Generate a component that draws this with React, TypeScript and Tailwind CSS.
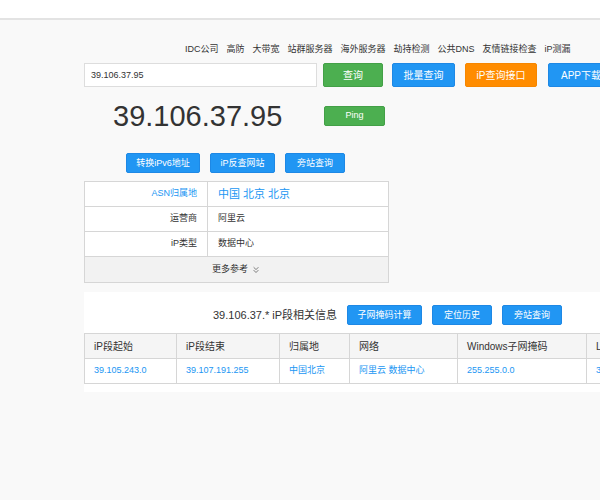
import { ChevronsDown } from "lucide-react";

const font = { fontFamily: '"Liberation Sans", "Noto Sans CJK SC", sans-serif' };

const navLinks = ["IDC公司", "高防", "大带宽", "站群服务器", "海外服务器", "劫持检测", "公共DNS", "友情链接检查", "iP测漏"];

const infoRows = [
  { label: "运营商", value: "阿里云" },
  { label: "iP类型", value: "数据中心" },
];

const segCols = [
  { head: "iP段起始", value: "39.105.243.0", w: "w-[91px]" },
  { head: "iP段结束", value: "39.107.191.255", w: "w-[103px]" },
  { head: "归属地", value: "中国北京", w: "w-[70px]" },
  { head: "网络", value: "阿里云 数据中心", w: "w-[108px]" },
  { head: "Windows子网掩码", value: "255.255.0.0", w: "w-[129px]" },
  { head: "Linux子网掩码", value: "39.105.0.0/16", w: "w-[129px]" },
];

function BlueBtn({ label, w }: { label: string; w: string }) {
  return (
    <button className={`${w} h-[20px] rounded-[2px] bg-[#2196f3] border border-[#1e88e5] text-white text-[9px] leading-none`}>
      {label}
    </button>
  );
}

export default function App() {
  return (
    <div className="w-[600px] h-[500px] overflow-hidden bg-[#f9f9f9] text-[#333]" style={font}>
      <div className="h-[20px] bg-white border-b-2 border-[#e3e3e3]"></div>

      <div className="pl-[84px] w-[1200px]">
        {/* top links */}
        <nav className="flex gap-[8px] ml-[101px] mt-[23px] h-[14px] items-center text-[9px] text-[#333]">
          {navLinks.map((l) => (
            <a key={l}>{l}</a>
          ))}
        </nav>

        {/* search row */}
        <div className="flex items-center mt-[6px] h-[24px]">
          <input
            defaultValue="39.106.37.95"
            className="w-[233px] h-[24px] bg-white border border-[#ddd] px-[6px] text-[9px] text-[#333] outline-none"
          />
          <button className="ml-[6px] w-[60px] h-[24px] rounded-[2px] bg-[#4caf50] border border-[#43a047] text-white text-[10px]">查询</button>
          <button className="ml-[9px] w-[63px] h-[24px] rounded-[2px] bg-[#2196f3] border border-[#1e88e5] text-white text-[10px]">批量查询</button>
          <button className="ml-[10px] w-[72px] h-[24px] rounded-[2px] bg-[#ff8c00] border border-[#f68600] text-white text-[10px]">iP查询接口</button>
          <button className="ml-[11px] w-[66px] h-[24px] rounded-[2px] bg-[#2196f3] border border-[#1e88e5] text-white text-[10px]">APP下载</button>
        </div>

        {/* big ip */}
        <div className="flex items-center h-[40px] mt-[9px]">
          <div className="ml-[29px] w-[211px] text-[29px] leading-none text-[#333]">39.106.37.95</div>
          <button className="w-[61px] h-[20px] rounded-[2px] bg-[#4caf50] border border-[#43a047] text-white text-[9px]">Ping</button>
        </div>

        {/* action buttons */}
        <div className="flex gap-[10px] ml-[42px] mt-[17px]">
          <BlueBtn label="转换iPv6地址" w="w-[74px]" />
          <BlueBtn label="iP反查网站" w="w-[65px]" />
          <BlueBtn label="旁站查询" w="w-[60px]" />
        </div>

        {/* info table */}
        <div className="mt-[8px] w-[305px] bg-white border border-[#d6d6d6] text-[9px]">
          <div className="flex h-[25px] border-b border-[#d6d6d6]">
            <div className="w-[123px] pr-[10px] flex items-center justify-end text-[#2196f3] border-r border-[#d6d6d6]">ASN归属地</div>
            <div className="flex-1 pl-[10px] flex items-center text-[#2196f3] text-[11px]">中国 北京 北京</div>
          </div>
          {infoRows.map((r) => (
            <div key={r.label} className="flex h-[25px] border-b border-[#d6d6d6]">
              <div className="w-[123px] pr-[10px] flex items-center justify-end border-r border-[#d6d6d6]">{r.label}</div>
              <div className="flex-1 pl-[10px] flex items-center">{r.value}</div>
            </div>
          ))}
          <div className="flex h-[25px] items-center justify-center gap-[3px] bg-[#f2f2f2]">
            更多参考 <ChevronsDown size={10} strokeWidth={1.5} />
          </div>
        </div>
      </div>

      {/* ip segment section */}
      <div className="mt-[9px] ml-[84px] w-[1200px] bg-white pt-[13px] pb-[8px]">
        <div className="flex items-center h-[20px]">
          <div className="ml-[129px] w-[134px] text-[11px]">39.106.37.* iP段相关信息</div>
          <div className="flex gap-[10px]">
            <BlueBtn label="子网掩码计算" w="w-[75px]" />
            <BlueBtn label="定位历史" w="w-[60px]" />
            <BlueBtn label="旁站查询" w="w-[60px]" />
          </div>
        </div>

        <div className="mt-[8px] inline-flex border border-[#d6d6d6]">
          {segCols.map((c, i) => (
            <div key={c.head} className={`${c.w} ${i > 0 ? "border-l border-[#d6d6d6]" : ""}`}>
              <div className="h-[25px] flex items-center pl-[9px] bg-[#f5f5f5] border-b border-[#d6d6d6] text-[10px] text-[#333]">{c.head}</div>
              <div className="h-[24px] flex items-center pl-[9px] text-[9px] text-[#2196f3]">{c.value}</div>
            </div>
          ))}
        </div>
      </div>
    </div>
  );
}
